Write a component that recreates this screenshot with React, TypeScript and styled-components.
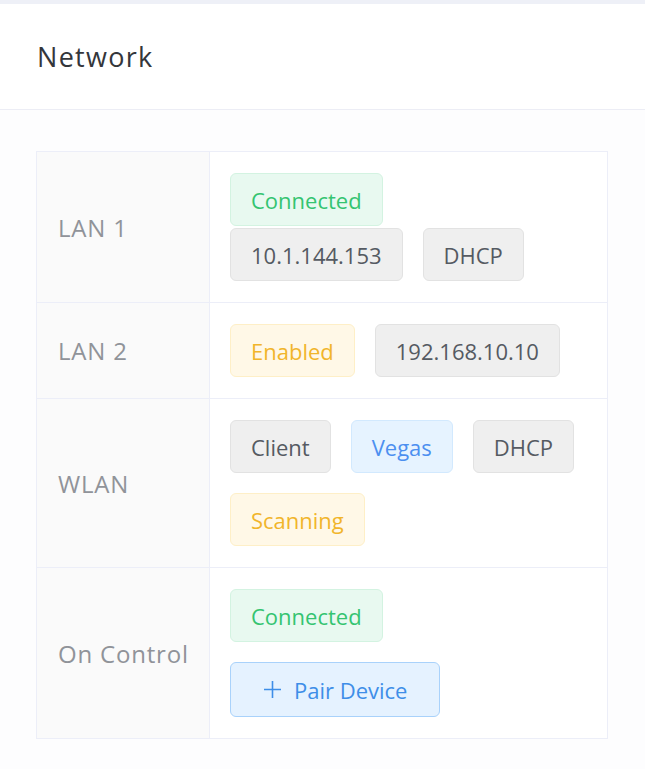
import React from "react";
import styled, { createGlobalStyle } from "styled-components";

const GlobalStyle = createGlobalStyle`
  html, body { margin: 0; padding: 0; background: #fdfdfe; }
  body { font-family: "Open Sans", "Noto Sans", sans-serif; }
`;

const Page = styled.div`
  border-top: 4px solid #eef0f7;
  min-height: 765px;
  background: #fdfdfe;
`;

const Header = styled.div`
  height: 105px;
  display: flex;
  align-items: center;
  padding-left: 37px;
  background: #ffffff;
  border-bottom: 1px solid #ecedf5;
  font-size: 27px;
  letter-spacing: 1.3px;
  color: #34363b;
`;

const Body = styled.div`
  padding: 41px 37px 0 36px;
`;

const Table = styled.div`
  border: 1px solid #eceef8;
  border-bottom: none;
`;

const Row = styled.div`
  display: grid;
  grid-template-columns: 173px 1fr;
  border-bottom: 1px solid #eceef8;
`;

const Label = styled.div`
  display: flex;
  align-items: center;
  padding: 0 8px 0 21px;
  background: #fafafa;
  border-right: 1px solid #eceef8;
  color: #909399;
  font-size: 24px;
  letter-spacing: 0.8px;
  white-space: nowrap;
`;

const Cell = styled.div<{ $gap: number }>`
  display: flex;
  flex-direction: column;
  align-items: flex-start;
  gap: ${(p) => p.$gap}px;
  padding: 21px 20px;
  background: #ffffff;
`;

const TagLine = styled.div`
  display: flex;
  flex-wrap: wrap;
  gap: 20px;
`;

type Kind = "success" | "info" | "warning" | "primary";

const palette: Record<Kind, { bg: string; bd: string; fg: string }> = {
  success: { bg: "#e8f9f0", bd: "#d3f3e1", fg: "#34c471" },
  info: { bg: "#efefef", bd: "#e2e2e2", fg: "#555a62" },
  warning: { bg: "#fff8e7", bd: "#feefc7", fg: "#f1b52b" },
  primary: { bg: "#e6f3ff", bd: "#d2e9fe", fg: "#4c8ff0" },
};

const Tag = styled.span<{ $kind: Kind }>`
  display: inline-flex;
  align-items: center;
  box-sizing: border-box;
  height: 53px;
  padding: 0 20px;
  border-radius: 6px;
  border: 1px solid ${(p) => palette[p.$kind].bd};
  background: ${(p) => palette[p.$kind].bg};
  color: ${(p) => palette[p.$kind].fg};
  font-size: 22px;
  white-space: nowrap;
`;

const PairButton = styled.button`
  display: inline-flex;
  align-items: center;
  gap: 12px;
  box-sizing: border-box;
  height: 55px;
  padding: 0 32px 0 32px;
  border: 1px solid #a9d2fb;
  border-radius: 6px;
  background: #e5f2ff;
  color: #3e8ee8;
  font-family: inherit;
  font-size: 22px;
  cursor: pointer;
`;

const PlusIcon = () => (
  <svg width="19" height="19" viewBox="0 0 19 19" fill="none">
    <path d="M9.5 1v17M1 9.5h17" stroke="#3e8ee8" strokeWidth="1.6" />
  </svg>
);

export default function App() {
  return (
    <>
      <GlobalStyle />
      <Page>
        <Header>Network</Header>
        <Body>
          <Table>
            <Row>
              <Label>LAN 1</Label>
              <Cell $gap={2}>
                <Tag $kind="success">Connected</Tag>
                <TagLine>
                  <Tag $kind="info">10.1.144.153</Tag>
                  <Tag $kind="info">DHCP</Tag>
                </TagLine>
              </Cell>
            </Row>
            <Row>
              <Label>LAN 2</Label>
              <Cell $gap={20}>
                <TagLine>
                  <Tag $kind="warning">Enabled</Tag>
                  <Tag $kind="info">192.168.10.10</Tag>
                </TagLine>
              </Cell>
            </Row>
            <Row>
              <Label>WLAN</Label>
              <Cell $gap={20}>
                <TagLine>
                  <Tag $kind="info">Client</Tag>
                  <Tag $kind="primary">Vegas</Tag>
                  <Tag $kind="info">DHCP</Tag>
                  <Tag $kind="warning">Scanning</Tag>
                </TagLine>
              </Cell>
            </Row>
            <Row>
              <Label>On Control</Label>
              <Cell $gap={20}>
                <Tag $kind="success">Connected</Tag>
                <PairButton>
                  <PlusIcon />
                  Pair Device
                </PairButton>
              </Cell>
            </Row>
          </Table>
        </Body>
      </Page>
    </>
  );
}
